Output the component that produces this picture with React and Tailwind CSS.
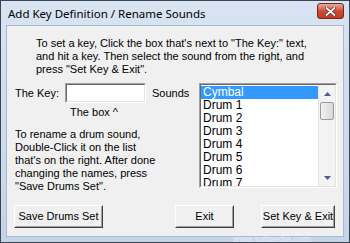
import React from 'react';

const sounds = ['Cymbal', 'Drum 1', 'Drum 2', 'Drum 3', 'Drum 4', 'Drum 5', 'Drum 6', 'Drum 7'];

function Button({ children, className = '' }) {
  return (
    <div
      className={`h-[23px] border border-t-white border-l-white border-b-[#404040] border-r-[#404040] bg-[#f0f0f0] ${className}`}
    >
      <div className="h-full flex items-center justify-center whitespace-nowrap border border-t-[#f0f0f0] border-l-[#f0f0f0] border-b-[#a0a0a0] border-r-[#a0a0a0] text-[11px] text-black">
        {children}
      </div>
    </div>
  );
}

function Sunken({ children, className = '' }) {
  return (
    <div
      className={`border border-t-[#a0a0a0] border-l-[#a0a0a0] border-b-white border-r-white ${className}`}
    >
      <div className="h-full border border-t-[#696969] border-l-[#696969] border-b-[#e3e3e3] border-r-[#e3e3e3] bg-white">
        {children}
      </div>
    </div>
  );
}

function ScrollBar() {
  return (
    <div className="w-[17px] h-full flex flex-col bg-[#f3f3f3] border-l border-[#e8e8e8]">
      <div className="h-[17px] flex items-center justify-center">
        <svg width="7" height="4" viewBox="0 0 7 4">
          <path d="M3.5 0 L7 4 L0 4 Z" fill="#4d6185" />
        </svg>
      </div>
      <div className="mx-[1px] h-[18px] rounded-[2px] border border-[#9a9a9a] bg-gradient-to-r from-[#f2f2f2] to-[#d8d8d8]" />
      <div className="flex-1" />
      <div className="h-[17px] flex items-center justify-center">
        <svg width="7" height="4" viewBox="0 0 7 4">
          <path d="M0 0 L7 0 L3.5 4 Z" fill="#4d6185" />
        </svg>
      </div>
    </div>
  );
}

export default function App() {
  return (
    <div
      className="relative w-[350px] h-[243px] overflow-hidden border border-[#3a4656] bg-gradient-to-b from-[#d9e4f2] to-[#c4d4e9] flex flex-col"
      style={{ fontFamily: '"Liberation Sans", Arial, sans-serif' }}
    >
      <div className="h-[24px] flex items-center justify-between pl-[7px] pr-[5px]">
        <span className="text-[11.5px] text-black pt-[1px]" style={{ fontFamily: '"Noto Sans", sans-serif' }}>
          Add Key Definition / Rename Sounds
        </span>
        <div className="w-[27px] h-[16px] mb-[4px] rounded-[3px] border border-[#6b2a22] bg-gradient-to-b from-[#e9a99a] via-[#cf4b36] to-[#c23a24] flex items-center justify-center">
          <svg width="11" height="9" viewBox="0 0 11 9">
            <path d="M1.5 1 L9.5 8 M9.5 1 L1.5 8" stroke="#5a2a24" strokeWidth="3.2" strokeLinecap="round" />
            <path d="M1.5 1 L9.5 8 M9.5 1 L1.5 8" stroke="#ffffff" strokeWidth="1.8" strokeLinecap="round" />
          </svg>
        </div>
      </div>

      <div className="mx-[5px] h-[212px] bg-[#f0f0f0] border border-[#a9bad0] flex flex-col text-[11px] leading-[13px] text-black">
        <div className="pt-[11px] pl-[29px]">
          <div>To set a key, Click the box that's next to "The Key:" text,</div>
          <div>and hit a key. Then select the sound from the right, and</div>
          <div>press "Set Key &amp; Exit".</div>
        </div>

        <div className="mt-[7px] flex">
          <div className="pl-[8px] w-[192px] flex flex-col">
            <div className="flex items-center h-[20px]">
              <span className="w-[50px]">The Key:</span>
              <Sunken className="w-[81px] h-[20px]" />
              <span className="ml-[6px]">Sounds</span>
            </div>
            <div className="mt-[3px] pl-[55px]">The box ^</div>
            <div className="mt-[9px]">
              <div>To rename a drum sound,</div>
              <div>Double-Click it on the list</div>
              <div>that's on the right. After done</div>
              <div>changing the names, press</div>
              <div>"Save Drums Set".</div>
            </div>
          </div>
          <Sunken className="w-[138px] h-[105px]">
            <div className="flex h-full">
              <div className="flex-1 overflow-hidden pt-[1px] text-[12px] leading-[13px]">
                {sounds.map((s, i) => (
                  <div
                    key={s}
                    className={`h-[13px] pl-[2px] ${i === 0 ? 'bg-[#3399ff] text-white' : ''}`}
                  >
                    {s}
                  </div>
                ))}
              </div>
              <ScrollBar />
            </div>
          </Sunken>
        </div>

        <div className="mt-[12px] flex items-center">
          <Button className="ml-[7px] w-[89px]">Save Drums Set</Button>
          <Button className="ml-[72px] w-[59px]">Exit</Button>
          <Button className="ml-[27px] w-[74px]">Set Key &amp; Exit</Button>
        </div>
      </div>

      <div className="absolute left-[232px] top-[234px] text-[9px] leading-none text-white/60 pointer-events-none">
        www.softpedia.com
      </div>
    </div>
  );
}
